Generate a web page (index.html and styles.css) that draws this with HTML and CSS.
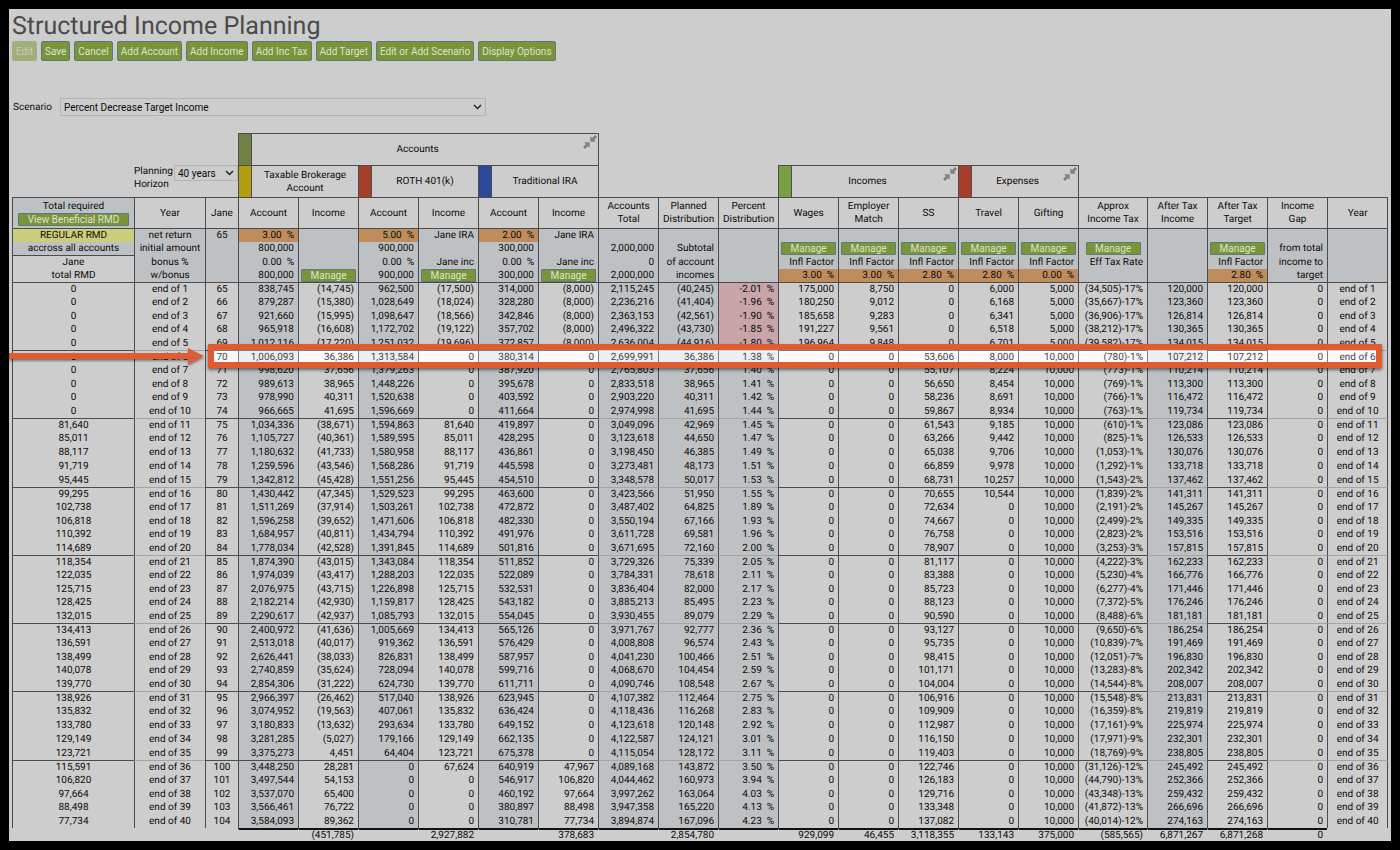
FILE: index.html
```html
<!DOCTYPE html>
<html lang="en">
<head>
  <meta charset="UTF-8">
  <meta name="viewport" content="width=device-width, initial-scale=1.0">
  <title>Structured Income Planning</title>
  <link rel="stylesheet" href="styles.css">
</head>
<body>
  <svg class="sprite" aria-hidden="true">
    <symbol id="collapse" viewBox="0 0 14 14">
      <path d="M7.300 1V6.700H13L11 5L14 2L12 0L9 3Z"/>
      <path d="M6.700 13V7.300H1L3 9L0 12L2 14L5 11Z"/>
    </symbol>
  </svg>
  <main class="page">
    <h1>Structured Income Planning</h1>
    <div class="toolbar">
      <button class="btn" type="button" disabled>Edit</button>
      <button class="btn" type="button">Save</button>
      <button class="btn" type="button">Cancel</button>
      <button class="btn" type="button">Add Account</button>
      <button class="btn" type="button">Add Income</button>
      <button class="btn" type="button">Add Inc Tax</button>
      <button class="btn" type="button">Add Target</button>
      <button class="btn" type="button">Edit or Add Scenario</button>
      <button class="btn" type="button">Display Options</button>
    </div>
    <div class="scenario">
      <label for="scenario">Scenario</label>
      <select id="scenario">
        <option>Percent Decrease Target Income</option>
      </select>
    </div>
    <table class="plan">
      <colgroup>
        <col class="col-rmd"><col class="col-year"><col class="col-age">
        <col span="14">
        <col class="col-tax">
        <col span="3"><col class="col-end">
      </colgroup>
      <thead>
        <tr class="group-row">
          <td colspan="3"></td>
          <th colspan="6" class="group">
            <div class="group-box"><span class="swatch olive"></span><span class="group-name">Accounts</span><button class="collapse" type="button" aria-label="Collapse accounts"><svg><use href="#collapse"/></svg></button></div>
          </th>
          <td colspan="13" class="edge"></td>
        </tr>
        <tr class="group-row">
          <td></td>
          <td colspan="2">
            <div class="horizon">
              <label for="horizon">Planning Horizon</label>
              <select id="horizon"><option>40 years</option></select>
            </div>
          </td>
          <th colspan="2" class="group"><div class="group-box"><span class="swatch gold"></span><span class="group-name">Taxable Brokerage Account</span></div></th>
          <th colspan="2" class="group"><div class="group-box"><span class="swatch red"></span><span class="group-name">ROTH 401(k)</span></div></th>
          <th colspan="2" class="group"><div class="group-box"><span class="swatch blue"></span><span class="group-name">Traditional IRA</span></div></th>
          <td colspan="3" class="edge"></td>
          <th colspan="3" class="group"><div class="group-box"><span class="swatch green"></span><span class="group-name">Incomes</span><button class="collapse" type="button" aria-label="Collapse incomes"><svg><use href="#collapse"/></svg></button></div></th>
          <th colspan="2" class="group"><div class="group-box"><span class="swatch red"></span><span class="group-name">Expenses</span><button class="collapse" type="button" aria-label="Collapse expenses"><svg><use href="#collapse"/></svg></button></div></th>
          <td colspan="5" class="edge"></td>
        </tr>
        <tr class="names">
          <th class="rmd-head">Total required<button class="btn-small wide" type="button">View Beneficial RMD</button></th>
          <th>Year</th><th>Jane</th>
          <th>Account</th><th>Income</th>
          <th>Account</th><th>Income</th>
          <th>Account</th><th>Income</th>
          <th>Accounts Total</th><th>Planned Distribution</th><th>Percent Distribution</th>
          <th>Wages</th><th>Employer Match</th><th>SS</th>
          <th>Travel</th><th>Gifting</th>
          <th>Approx<br>Income Tax</th><th>After Tax Income</th><th>After Tax Target</th>
          <th>Income<br>Gap</th><th>Year</th>
        </tr>
      </thead>
      <tbody class="setup">
        <tr>
          <td class="c rate-yellow">REGULAR RMD</td><td class="c">net return</td><td class="c">65</td>
          <td class="rate">3.00 &nbsp;%</td><td></td>
          <td class="rate">5.00 &nbsp;%</td><td>Jane IRA</td>
          <td class="rate">2.00 &nbsp;%</td><td>Jane IRA</td>
          <td></td><td></td><td></td><td></td><td></td><td></td><td></td><td></td><td></td><td></td><td></td><td></td><td></td>
        </tr>
        <tr>
          <td class="c">accross all accounts</td><td class="c">initial amount</td><td></td>
          <td>800,000</td><td></td><td>900,000</td><td></td><td>300,000</td><td></td>
          <td>2,000,000</td><td>Subtotal</td><td></td>
          <td class="action"><button class="btn-small" type="button">Manage</button></td>
          <td class="action"><button class="btn-small" type="button">Manage</button></td>
          <td class="action"><button class="btn-small" type="button">Manage</button></td>
          <td class="action"><button class="btn-small" type="button">Manage</button></td>
          <td class="action"><button class="btn-small" type="button">Manage</button></td>
          <td class="action"><button class="btn-small" type="button">Manage</button></td>
          <td></td>
          <td class="action"><button class="btn-small" type="button">Manage</button></td>
          <td>from total</td><td></td>
        </tr>
        <tr>
          <td class="c plain line">Jane</td><td class="c">bonus %</td><td></td>
          <td>0.00 &nbsp;%</td><td></td><td>0.00 &nbsp;%</td><td>Jane inc</td><td>0.00 &nbsp;%</td><td>Jane inc</td>
          <td>0</td><td>of account</td><td></td>
          <td>Infl Factor</td><td>Infl Factor</td><td>Infl Factor</td><td>Infl Factor</td><td>Infl Factor</td>
          <td>Eff Tax Rate</td><td></td><td>Infl Factor</td><td>income to</td><td></td>
        </tr>
        <tr>
          <td class="c plain">total RMD</td><td class="c">w/bonus</td><td></td>
          <td>800,000</td><td class="action"><button class="btn-small" type="button">Manage</button></td>
          <td>900,000</td><td class="action"><button class="btn-small" type="button">Manage</button></td>
          <td>300,000</td><td class="action"><button class="btn-small" type="button">Manage</button></td>
          <td>2,000,000</td><td>incomes</td><td></td>
          <td class="rate">3.00 &nbsp;%</td><td class="rate">3.00 &nbsp;%</td><td class="rate">2.80 &nbsp;%</td>
          <td class="rate">2.80 &nbsp;%</td><td class="rate">0.00 &nbsp;%</td>
          <td></td><td></td><td class="rate">2.80 &nbsp;%</td><td>target</td><td></td>
        </tr>
      </tbody>
      <tfoot>
        <tr>
          <td></td><td></td><td></td>
          <td class="sum"></td><td class="sum">(451,785)</td><td class="sum"></td><td class="sum">2,927,882</td>
          <td class="sum"></td><td class="sum">378,683</td><td class="sum"></td><td class="sum">2,854,780</td><td class="sum"></td>
          <td class="sum">929,099</td><td class="sum">46,455</td><td class="sum">3,118,355</td>
          <td class="sum">133,143</td><td class="sum">375,000</td><td class="sum">(585,565)</td>
          <td class="sum">6,871,267</td><td class="sum">6,871,268</td><td class="sum">0</td><td></td>
        </tr>
      </tfoot>
    </table>
  </main>
  <script src="script.js"></script>
</body>
</html>
```
FILE: styles.css
```css
* {
  box-sizing: border-box;
}
body {
  margin: 0;
  padding: 9px;
  background: #000;
  color: #0c0c0c;
  font-family: Roboto, "Liberation Sans", sans-serif;
  font-size: 10px;
  line-height: 13px;
  text-rendering: geometricPrecision;
}
button, select {
  font: inherit;
  color: inherit;
  margin: 0;
}
.sprite {
  display: none;
}
.page {
  background: #cdcdcd;
  padding: 3px 3px 0;
  overflow: hidden;
}
h1 {
  margin: 0;
  font-size: 25px;
  font-weight: 400;
  line-height: 29px;
  color: #4b4b4b;
}
.toolbar {
  display: flex;
  gap: 4px;
}
.btn {
  height: 20px;
  padding: 0 3px;
  background: #7a943b;
  border: 1px solid #5c7a7c;
  border-radius: 2px;
  color: #dde2cf;
}
.btn:disabled {
  background: #a0ae7c;
  border-color: #a0ae7c;
  color: #c6cdb2;
}
.scenario {
  display: flex;
  align-items: center;
  gap: 8px;
  margin: 37px 0 17px 1px;
}
select {
  appearance: none;
  background-color: #cdcdcd;
  background-image: url("data:image/svg+xml,%3Csvg xmlns='http://www.w3.org/2000/svg' width='9' height='6'%3E%3Cpath d='M1 1l3.500 3.500L8 1' fill='none' stroke='%23222' stroke-width='1.500'/%3E%3C/svg%3E");
  background-repeat: no-repeat;
  background-position: right 3px center;
  border: 1px solid #b4b4b4;
  border-radius: 0;
  padding: 0 3px;
}
.scenario select {
  width: 31%;
  height: 18px;
}
.horizon {
  display: flex;
}
.horizon label {
  flex: 0 0 40px;
  white-space: normal;
}
.horizon select {
  flex: 1;
  min-width: 0;
  height: 16px;
}

.plan {
  width: 100%;
  table-layout: fixed;
  border-collapse: separate;
  border-spacing: 0;
}
.plan col { width: 60px; }
.plan .col-rmd { width: 122px; }
.plan .col-year { width: 71px; }
.plan .col-age { width: 33px; }
.plan .col-tax { width: 69px; }
.plan .col-end { width: 61px; }
.plan td, .plan th {
  padding: 0;
  font-weight: 400;
  white-space: nowrap;
}
.group-row td, .group-row th {
  height: 32px;
  vertical-align: top;
}
.plan .group {
  border-top: 1px solid #4c4c4c;
  border-left: 1px solid #4c4c4c;
}
.plan .edge {
  border-left: 1px solid #4c4c4c;
}
.group-box {
  display: flex;
  height: 31px;
}
.swatch {
  flex: 0 0 13px;
  border-right: 1px solid #4c4c4c;
}
.olive { background: #6f8244; }
.gold { background: #b39d10; }
.red { background: #a63e2a; }
.blue { background: #2b489b; }
.green { background: #77a043; }
.group-name {
  flex: 1;
  align-self: center;
  padding: 0 4px;
  white-space: normal;
}
.collapse {
  width: 15px;
  height: 14px;
  margin-top: 1px;
  padding: 0;
  border: 0;
  background: none;
}
.collapse svg {
  display: block;
  width: 14px;
  height: 14px;
  fill: #808080;
}
.plan .names th {
  height: 31px;
  border-top: 1px solid #4c4c4c;
  border-left: 1px solid #4c4c4c;
  white-space: normal;
}
.plan .names th:last-child,
.plan tbody td:last-child {
  border-right: 1px solid #4c4c4c;
}
.plan .names .rmd-head {
  background: #bec1c3;
}
.btn-small {
  display: block;
  width: 55px;
  height: 13px;
  margin: 0 auto;
  padding: 0;
  background: #7a943b;
  border: 1px solid #5c7a7c;
  border-radius: 1px;
  color: #dde2cf;
  line-height: 11px;
}
.wide {
  width: 111px;
}
.plan tbody tr:nth-child(odd) td { height: 14px; }
.plan tbody tr:nth-child(even) td { height: 13px; }
.plan .years:nth-of-type(4n) tr:nth-child(4) td { height: 14px; }
.plan tbody td {
  border-left: 1px solid #4c4c4c;
  padding-right: 4px;
  text-align: right;
  line-height: 13px;
}
.plan tbody .c {
  padding: 0;
  text-align: center;
}
.plan .setup td {
  background: #bec1c3;
}
.plan .setup tr:first-child td {
  border-top: 1px solid #4c4c4c;
}
.plan .setup .rate { background: #bf8d5b; }
.plan .setup .rate-yellow { background: #cccd7b; }
.plan .setup .plain { background: #cdcdcd; }
.plan .setup .line { border-top: 1px solid #4c4c4c; }
.plan .setup .action { padding: 0; }

.plan .years tr:first-child td { border-top: 1px solid #4c4c4c; }
.plan .years ~ .years tr:first-child .soft { border-top-color: #a3a5a6; }
.plan .shade { background: #bec1c3; }
.plan .years .negative { background: #c9a4a9; }
.marked {
  position: relative;
}
.callout {
  position: absolute;
  z-index: 2;
  top: -6px;
  left: -3px;
  right: 6px;
  display: flex;
  align-items: center;
  gap: 4px;
  pointer-events: none;
}
.callout svg {
  flex: 0 0 195px;
  height: 16px;
  fill: #df5c33;
  filter: drop-shadow(0 2px 1px rgba(0, 0, 0, 0.4));
}
.callout-box {
  flex: 1;
  height: 24px;
  border: 6px solid #df5c33;
  background: rgba(255, 255, 255, 0.2);
  backdrop-filter: brightness(1.22);
  box-shadow: 0 2px 3px rgba(0, 0, 0, 0.5);
}
.plan tfoot td {
  height: 13px;
  padding-right: 4px;
  text-align: right;
  line-height: 11px;
}
.plan tfoot .sum {
  border-top: 2px solid #111;
  border-left: 1px solid transparent;
}
```
FILE: script.js
```js
// rmd, account/income x3, total, planned, percent, wages, match, ss, travel, gifting, tax, after tax income
const data = `
0 838,745 (14,745) 962,500 (17,500) 314,000 (8,000) 2,115,245 (40,245) -2.01 175,000 8,750 0 6,000 5,000 (34,505)-17% 120,000
0 879,287 (15,380) 1,028,649 (18,024) 328,280 (8,000) 2,236,216 (41,404) -1.96 180,250 9,012 0 6,168 5,000 (35,667)-17% 123,360
0 921,660 (15,995) 1,098,647 (18,566) 342,846 (8,000) 2,363,153 (42,561) -1.90 185,658 9,283 0 6,341 5,000 (36,906)-17% 126,814
0 965,918 (16,608) 1,172,702 (19,122) 357,702 (8,000) 2,496,322 (43,730) -1.85 191,227 9,561 0 6,518 5,000 (38,212)-17% 130,365
0 1,012,116 (17,220) 1,251,032 (19,696) 372,857 (8,000) 2,636,004 (44,916) -1.80 196,964 9,848 0 6,701 5,000 (39,582)-17% 134,015
0 1,006,093 36,386 1,313,584 0 380,314 0 2,699,991 36,386 1.38 0 0 53,606 8,000 10,000 (780)-1% 107,212
0 998,620 37,656 1,379,263 0 387,920 0 2,765,803 37,656 1.40 0 0 55,107 8,224 10,000 (773)-1% 110,214
0 989,613 38,965 1,448,226 0 395,678 0 2,833,518 38,965 1.41 0 0 56,650 8,454 10,000 (769)-1% 113,300
0 978,990 40,311 1,520,638 0 403,592 0 2,903,220 40,311 1.42 0 0 58,236 8,691 10,000 (766)-1% 116,472
0 966,665 41,695 1,596,669 0 411,664 0 2,974,998 41,695 1.44 0 0 59,867 8,934 10,000 (763)-1% 119,734
81,640 1,034,336 (38,671) 1,594,863 81,640 419,897 0 3,049,096 42,969 1.45 0 0 61,543 9,185 10,000 (610)-1% 123,086
85,011 1,105,727 (40,361) 1,589,595 85,011 428,295 0 3,123,618 44,650 1.47 0 0 63,266 9,442 10,000 (825)-1% 126,533
88,117 1,180,632 (41,733) 1,580,958 88,117 436,861 0 3,198,450 46,385 1.49 0 0 65,038 9,706 10,000 (1,053)-1% 130,076
91,719 1,259,596 (43,546) 1,568,286 91,719 445,598 0 3,273,481 48,173 1.51 0 0 66,859 9,978 10,000 (1,292)-1% 133,718
95,445 1,342,812 (45,428) 1,551,256 95,445 454,510 0 3,348,578 50,017 1.53 0 0 68,731 10,257 10,000 (1,543)-2% 137,462
99,295 1,430,442 (47,345) 1,529,523 99,295 463,600 0 3,423,566 51,950 1.55 0 0 70,655 10,544 10,000 (1,839)-2% 141,311
102,738 1,511,269 (37,914) 1,503,261 102,738 472,872 0 3,487,402 64,825 1.89 0 0 72,634 0 10,000 (2,191)-2% 145,267
106,818 1,596,258 (39,652) 1,471,606 106,818 482,330 0 3,550,194 67,166 1.93 0 0 74,667 0 10,000 (2,499)-2% 149,335
110,392 1,684,957 (40,811) 1,434,794 110,392 491,976 0 3,611,728 69,581 1.96 0 0 76,758 0 10,000 (2,823)-2% 153,516
114,689 1,778,034 (42,528) 1,391,845 114,689 501,816 0 3,671,695 72,160 2.00 0 0 78,907 0 10,000 (3,253)-3% 157,815
118,354 1,874,390 (43,015) 1,343,084 118,354 511,852 0 3,729,326 75,339 2.05 0 0 81,117 0 10,000 (4,222)-3% 162,233
122,035 1,974,039 (43,417) 1,288,203 122,035 522,089 0 3,784,331 78,618 2.11 0 0 83,388 0 10,000 (5,230)-4% 166,776
125,715 2,076,975 (43,715) 1,226,898 125,715 532,531 0 3,836,404 82,000 2.17 0 0 85,723 0 10,000 (6,277)-4% 171,446
128,425 2,182,214 (42,930) 1,159,817 128,425 543,182 0 3,885,213 85,495 2.23 0 0 88,123 0 10,000 (7,372)-5% 176,246
132,015 2,290,617 (42,937) 1,085,793 132,015 554,045 0 3,930,455 89,079 2.29 0 0 90,590 0 10,000 (8,488)-6% 181,181
134,413 2,400,972 (41,636) 1,005,669 134,413 565,126 0 3,971,767 92,777 2.36 0 0 93,127 0 10,000 (9,650)-6% 186,254
136,591 2,513,018 (40,017) 919,362 136,591 576,429 0 4,008,808 96,574 2.43 0 0 95,735 0 10,000 (10,839)-7% 191,469
138,499 2,626,441 (38,033) 826,831 138,499 587,957 0 4,041,230 100,466 2.51 0 0 98,415 0 10,000 (12,051)-7% 196,830
140,078 2,740,859 (35,624) 728,094 140,078 599,716 0 4,068,670 104,454 2.59 0 0 101,171 0 10,000 (13,283)-8% 202,342
139,770 2,854,306 (31,222) 624,730 139,770 611,711 0 4,090,746 108,548 2.67 0 0 104,004 0 10,000 (14,544)-8% 208,007
138,926 2,966,397 (26,462) 517,040 138,926 623,945 0 4,107,382 112,464 2.75 0 0 106,916 0 10,000 (15,548)-8% 213,831
135,832 3,074,952 (19,563) 407,061 135,832 636,424 0 4,118,436 116,268 2.83 0 0 109,909 0 10,000 (16,359)-8% 219,819
133,780 3,180,833 (13,632) 293,634 133,780 649,152 0 4,123,618 120,148 2.92 0 0 112,987 0 10,000 (17,161)-9% 225,974
129,149 3,281,285 (5,027) 179,166 129,149 662,135 0 4,122,587 124,121 3.01 0 0 116,150 0 10,000 (17,971)-9% 232,301
123,721 3,375,273 4,451 64,404 123,721 675,378 0 4,115,054 128,172 3.11 0 0 119,403 0 10,000 (18,769)-9% 238,805
115,591 3,448,250 28,281 0 67,624 640,919 47,967 4,089,168 143,872 3.50 0 0 122,746 0 10,000 (31,126)-12% 245,492
106,820 3,497,544 54,153 0 0 546,917 106,820 4,044,462 160,973 3.94 0 0 126,183 0 10,000 (44,790)-13% 252,366
97,664 3,537,070 65,400 0 0 460,192 97,664 3,997,262 163,064 4.03 0 0 129,716 0 10,000 (43,348)-13% 259,432
88,498 3,566,461 76,722 0 0 380,897 88,498 3,947,358 165,220 4.13 0 0 133,348 0 10,000 (41,872)-13% 266,696
77,734 3,584,093 89,362 0 0 310,781 77,734 3,894,874 167,096 4.23 0 0 137,082 0 10,000 (40,014)-12% 274,163
`.trim().split('\n').map(line => line.split(' '));

const centered = [0, 1, 2, 21];
const shaded = [3, 5, 7, 9, 10, 11, 18];
const soft = [1, 9, 10, 11, 18, 20, 21];
const markedYear = 6;

const callout = `<div class="callout">
  <svg viewBox="0 0 195 16"><path d="M0 5h179V0l16 8l-16 8v-5H0Z"/></svg>
  <div class="callout-box"></div>
</div>`;

function buildRow(values, index) {
  const year = index + 1;
  const [rmd, ...rest] = values;
  const afterTax = rest[rest.length - 1];
  const cells = [rmd, 'end of ' + year, 65 + index, ...rest, afterTax, '0', 'end of ' + year];
  const tr = document.createElement('tr');
  cells.forEach((value, i) => {
    const td = document.createElement('td');
    td.textContent = i === 11 ? value + ' \u00a0%' : value;
    if (centered.includes(i)) td.classList.add('c');
    if (shaded.includes(i)) td.classList.add('shade');
    if (soft.includes(i)) td.classList.add('soft');
    if (i === 11 && value.startsWith('-')) td.classList.add('negative');
    tr.appendChild(td);
  });
  if (year === markedYear) {
    tr.classList.add('marked');
    tr.firstChild.insertAdjacentHTML('beforeend', callout);
  }
  return tr;
}

// one tbody for every five years
const table = document.querySelector('.plan');
for (let i = 0; i < data.length; i += 5) {
  const group = document.createElement('tbody');
  group.className = 'years';
  data.slice(i, i + 5).forEach((values, n) => group.appendChild(buildRow(values, i + n)));
  table.insertBefore(group, table.tFoot);
}
```
